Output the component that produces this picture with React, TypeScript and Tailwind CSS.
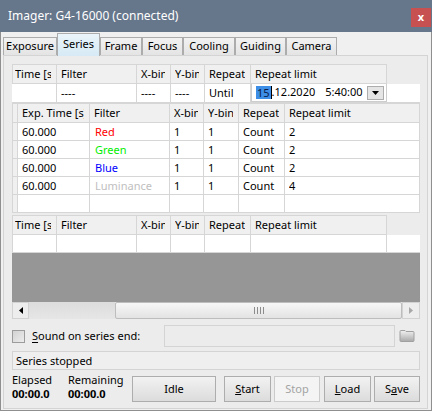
import React from 'react';

type Col = { label: string; w: string; pl: string };

const TOP: Col[] = [
  { label: 'Time [s]', w: 'w-[44px]', pl: 'pl-[2px]' },
  { label: 'Filter', w: 'w-[80px]', pl: 'pl-[4px]' },
  { label: 'X-bin', w: 'w-[34px]', pl: 'pl-[4px]' },
  { label: 'Y-bin', w: 'w-[34px]', pl: 'pl-[4px]' },
  { label: 'Repeat', w: 'w-[46px]', pl: 'pl-[4px]' },
  { label: 'Repeat limit', w: 'w-[136px]', pl: 'pl-[4px]' },
];

const SEQ: Col[] = [
  { label: 'Exp. Time [s]', w: 'w-[72px]', pl: 'pl-[4px]' },
  { label: 'Filter', w: 'w-[80px]', pl: 'pl-[4px]' },
  { label: 'X-bin', w: 'w-[34px]', pl: 'pl-[4px]' },
  { label: 'Y-bin', w: 'w-[35px]', pl: 'pl-[4px]' },
  { label: 'Repeat', w: 'w-[46px]', pl: 'pl-[4px]' },
  { label: 'Repeat limit', w: 'w-[135px]', pl: 'pl-[4px]' },
];

const ROWS = [
  { time: '60.000', filter: 'Red', color: 'text-[#ff0000]', x: '1', y: '1', rep: 'Count', lim: '2' },
  { time: '60.000', filter: 'Green', color: 'text-[#00ee00]', x: '1', y: '1', rep: 'Count', lim: '2' },
  { time: '60.000', filter: 'Blue', color: 'text-[#0000ff]', x: '1', y: '1', rep: 'Count', lim: '2' },
  { time: '60.000', filter: 'Luminance', color: 'text-[#c0c0c0]', x: '1', y: '1', rep: 'Count', lim: '4' },
];

const TABS = [
  { label: 'Exposure', w: 'w-[54px]' },
  { label: 'Series', w: 'w-[43px]', active: true },
  { label: 'Frame', w: 'w-[42px]' },
  { label: 'Focus', w: 'w-[41px]' },
  { label: 'Cooling', w: 'w-[52px]' },
  { label: 'Guiding', w: 'w-[51px]' },
  { label: 'Camera', w: 'w-[51px]' },
];

function Cell({ w, pl, children, className = '' }: { w: string; pl: string; children?: React.ReactNode; className?: string }) {
  return (
    <div className={`${w} ${pl} shrink-0 flex h-full border-r border-[#d6d6d6] ${className}`}>
      <div className="flex-1 min-w-0 whitespace-nowrap leading-[17px] pr-[5px]">
        <div className="overflow-hidden">{children}</div>
      </div>
    </div>
  );
}

function HeaderRow({ cols, indicator }: { cols: Col[]; indicator?: boolean }) {
  return (
    <div className="flex h-[20px] w-fit border-y border-l border-[#d6d6d6] bg-[#f0f0f0]">
      {indicator && <div className="w-[5px] h-full border-r border-[#d6d6d6] bg-[#f0f0f0]" />}
      {cols.map((c) => (
        <Cell key={c.label} w={c.w} pl={c.pl}>{c.label}</Cell>
      ))}
    </div>
  );
}

function Btn({ children, w, disabled }: { children: React.ReactNode; w: string; disabled?: boolean }) {
  return (
    <div
      className={`${w} h-[26px] flex items-center justify-center border ${
        disabled
          ? 'border-[#cbcbcb] bg-[#f4f4f4] text-[#a3a3a3]'
          : 'border-[#adadad] bg-gradient-to-b from-[#f2f2f2] to-[#dcdcdc] text-black'
      }`}
    >
      {children}
    </div>
  );
}

export default function App() {
  return (
    <div className="w-[432px] h-[411px] flex flex-col bg-[#f0f0f0] font-['Noto_Sans',sans-serif] text-[11px] text-black overflow-hidden">
      {/* title bar */}
      <div className="h-[32px] shrink-0 flex bg-[#66768b]">
        <div className="pl-[8px] pt-[7px] text-white text-[12px] leading-[18px]">Imager: G4-16000 (connected)</div>
        <div className="ml-auto mt-[8px] mr-[1px] w-[20px] h-[19px] bg-[#c75050] flex items-center justify-center text-white text-[11px] font-bold leading-none pb-[2px]">
          x
        </div>
      </div>

      <div className="flex-1 flex flex-col border-x border-b border-[#8f8f8f] pl-[2px] pr-[3px] pb-[1px]">
        {/* tabs */}
        <div className="h-[23px] shrink-0 flex items-end relative z-10">
          {TABS.map((t) =>
            t.active ? (
              <div
                key={t.label}
                className={`${t.w} h-[23px] mb-[-1px] border-x border-t border-[#acacac] bg-gradient-to-b from-[#eaf4fa] to-[#d6eaf5] flex items-center justify-center pb-[2px]`}
              >
                {t.label}
              </div>
            ) : (
              <div
                key={t.label}
                className={`${t.w} h-[18px] border-x border-t border-[#acacac] bg-gradient-to-b from-[#f2f2f2] to-[#e4e4e4] flex items-center justify-center`}
              >
                {t.label}
              </div>
            )
          )}
        </div>

        {/* page */}
        <div className="flex-1 flex flex-col border border-[#d4d4d4] bg-[#ececec] pl-[8px] pr-[6px] pt-[8px]">
          {/* until grid */}
          <div className="w-[408px] flex flex-col">
            <HeaderRow cols={TOP} />
            <div className="flex h-[19px] bg-white border-b border-[#d6d6d6]">
              <Cell w="w-[45px]" pl="pl-[3px]"> </Cell>
              <Cell w="w-[80px]" pl="pl-[4px]">----</Cell>
              <Cell w="w-[34px]" pl="pl-[4px]">----</Cell>
              <Cell w="w-[34px]" pl="pl-[4px]">----</Cell>
              <Cell w="w-[46px]" pl="pl-[4px]">Until</Cell>
              <div className="w-[136px] h-full border border-t-0 border-[#cdcdcd] flex items-center pl-[4px] pr-[2px]">
                <span className="bg-[#3d8ee6] text-[#0b1d4a] leading-[13px] px-[1px]">15</span>
                <span className="w-px h-[13px] bg-black" />
                <span>.12.2020</span>
                <span className="ml-[10px]">5:40:00</span>
                <div className="ml-auto w-[17px] h-[14px] border border-[#adadad] bg-[#e5e5e5] flex items-center justify-center">
                  <svg width="7" height="4" viewBox="0 0 7 4">
                    <polygon points="0,0 7,0 3.5,4" fill="#000" />
                  </svg>
                </div>
              </div>
            </div>
          </div>

          {/* sequence grid */}
          <div className="w-[408px] flex flex-col bg-white">
            <HeaderRow cols={SEQ} indicator />
            {ROWS.map((r, i) => (
              <div key={i} className="flex h-[18px] border-b border-l border-[#d6d6d6]">
                <div className="w-[5px] h-full border-r border-[#d6d6d6] bg-[#f0f0f0]" />
                <Cell w={SEQ[0].w} pl="pl-[4px]">{r.time}</Cell>
                <Cell w={SEQ[1].w} pl="pl-[5px]"><span className={r.color}>{r.filter}</span></Cell>
                <Cell w={SEQ[2].w} pl="pl-[4px]">{r.x}</Cell>
                <Cell w={SEQ[3].w} pl="pl-[4px]">{r.y}</Cell>
                <Cell w={SEQ[4].w} pl="pl-[4px]">{r.rep}</Cell>
                <Cell w={SEQ[5].w} pl="pl-[4px]">{r.lim}</Cell>
              </div>
            ))}
            <div className="flex h-[18px] border-b border-l border-[#d6d6d6]">
              <div className="w-[5px] h-full border-r border-[#d6d6d6] bg-[#f0f0f0]" />
              {SEQ.map((c) => (
                <Cell key={c.label} w={c.w} pl="pl-[4px]" />
              ))}
            </div>
          </div>

          {/* running grid */}
          <div className="w-[408px] flex flex-col mt-[2px]">
            <HeaderRow cols={TOP} />
            <div className="flex h-[18px] bg-white border-b border-[#d6d6d6]">
              <div className="w-[45px] border-x border-[#d6d6d6]" />
              <div className="w-[80px] border-r border-[#d6d6d6]" />
              <div className="w-[34px] border-r border-[#d6d6d6]" />
              <div className="w-[34px] border-r border-[#d6d6d6]" />
              <div className="w-[46px] border-r border-[#d6d6d6]" />
              <div className="w-[136px] border-r border-[#d6d6d6]" />
            </div>
            <div className="h-[49px] bg-[#969696]" />
            {/* scrollbar */}
            <div className="h-[17px] flex bg-[#e8e8e8]">
              <div className="w-[17px] h-full border border-[#d2d2d2] bg-[#ededed] flex items-center justify-center">
                <svg width="4" height="7" viewBox="0 0 4 7">
                  <polygon points="4,0 4,7 0,3.5" fill="#000" />
                </svg>
              </div>
              <div className="w-[86px] h-full bg-gradient-to-b from-[#dcdcdc] to-[#e6e6e6]" />
              <div className="flex-1 h-full border border-[#bdbdbd] rounded-[2px] bg-gradient-to-b from-[#f7f7f7] to-[#e3e3e3] flex items-center justify-center gap-[2px]">
                <div className="w-px h-[7px] bg-[#8c8c8c]" />
                <div className="w-px h-[7px] bg-[#8c8c8c]" />
                <div className="w-px h-[7px] bg-[#8c8c8c]" />
                <div className="w-px h-[7px] bg-[#8c8c8c]" />
              </div>
              <div className="w-[18px] h-full border border-[#d2d2d2] bg-[#ededed] flex items-center justify-center">
                <svg width="4" height="7" viewBox="0 0 4 7">
                  <polygon points="0,0 0,7 4,3.5" fill="#a8a8a8" />
                </svg>
              </div>
            </div>
          </div>

          {/* sound row */}
          <div className="flex items-center h-[22px] mt-[6px]">
            <div className="w-[13px] h-[13px] border border-[#9c9c9c] bg-gradient-to-br from-[#d2d2d2] to-[#ececec]" />
            <div className="w-[139px] pl-[7px]">
              <span className="underline underline-offset-2">S</span>ound on series end:
            </div>
            <div className="w-[231px] h-full border border-[#d4d4d4] bg-[#ececec]" />
            <svg className="ml-[4px]" width="16" height="12" viewBox="0 0 16 12">
              <defs>
                <linearGradient id="fg" x1="0" y1="0" x2="0" y2="1">
                  <stop offset="0" stopColor="#f2f2f2" />
                  <stop offset="1" stopColor="#a9a9a9" />
                </linearGradient>
              </defs>
              <path d="M1 1.5 Q1 0.5 2 0.5 H6 L7 1.5 H14 Q15 1.5 15 2.5 V10.5 Q15 11.5 14 11.5 H2 Q1 11.5 1 10.5 Z" fill="url(#fg)" stroke="#a0a0a0" />
            </svg>
          </div>

          {/* status */}
          <div className="w-[408px] h-[19px] mt-[4px] border border-[#d4d4d4] bg-[#efefef] pl-[3px] leading-[17px]">
            Series stopped
          </div>

          {/* bottom row */}
          <div className="flex items-start mt-[3px]">
            <div className="w-[56px] leading-[13px]">
              <div>Elapsed</div>
              <div className="font-bold mt-[1px]">00:00.0</div>
            </div>
            <div className="w-[64px] leading-[13px]">
              <div>Remaining</div>
              <div className="font-bold mt-[1px]">00:00.0</div>
            </div>
            <div className="mt-[3px] flex items-center">
              <Btn w="w-[84px]">Idle</Btn>
              <div className="ml-[8px]">
                <Btn w="w-[47px]"><span><span className="underline">S</span>tart</span></Btn>
              </div>
              <div className="ml-[3px]">
                <Btn w="w-[46px]" disabled>Stop</Btn>
              </div>
              <div className="ml-[4px]">
                <Btn w="w-[47px]"><span><span className="underline">L</span>oad</span></Btn>
              </div>
              <div className="ml-[3px]">
                <Btn w="w-[46px]"><span>S<span className="underline">a</span>ve</span></Btn>
              </div>
            </div>
          </div>
        </div>
      </div>
    </div>
  );
}
